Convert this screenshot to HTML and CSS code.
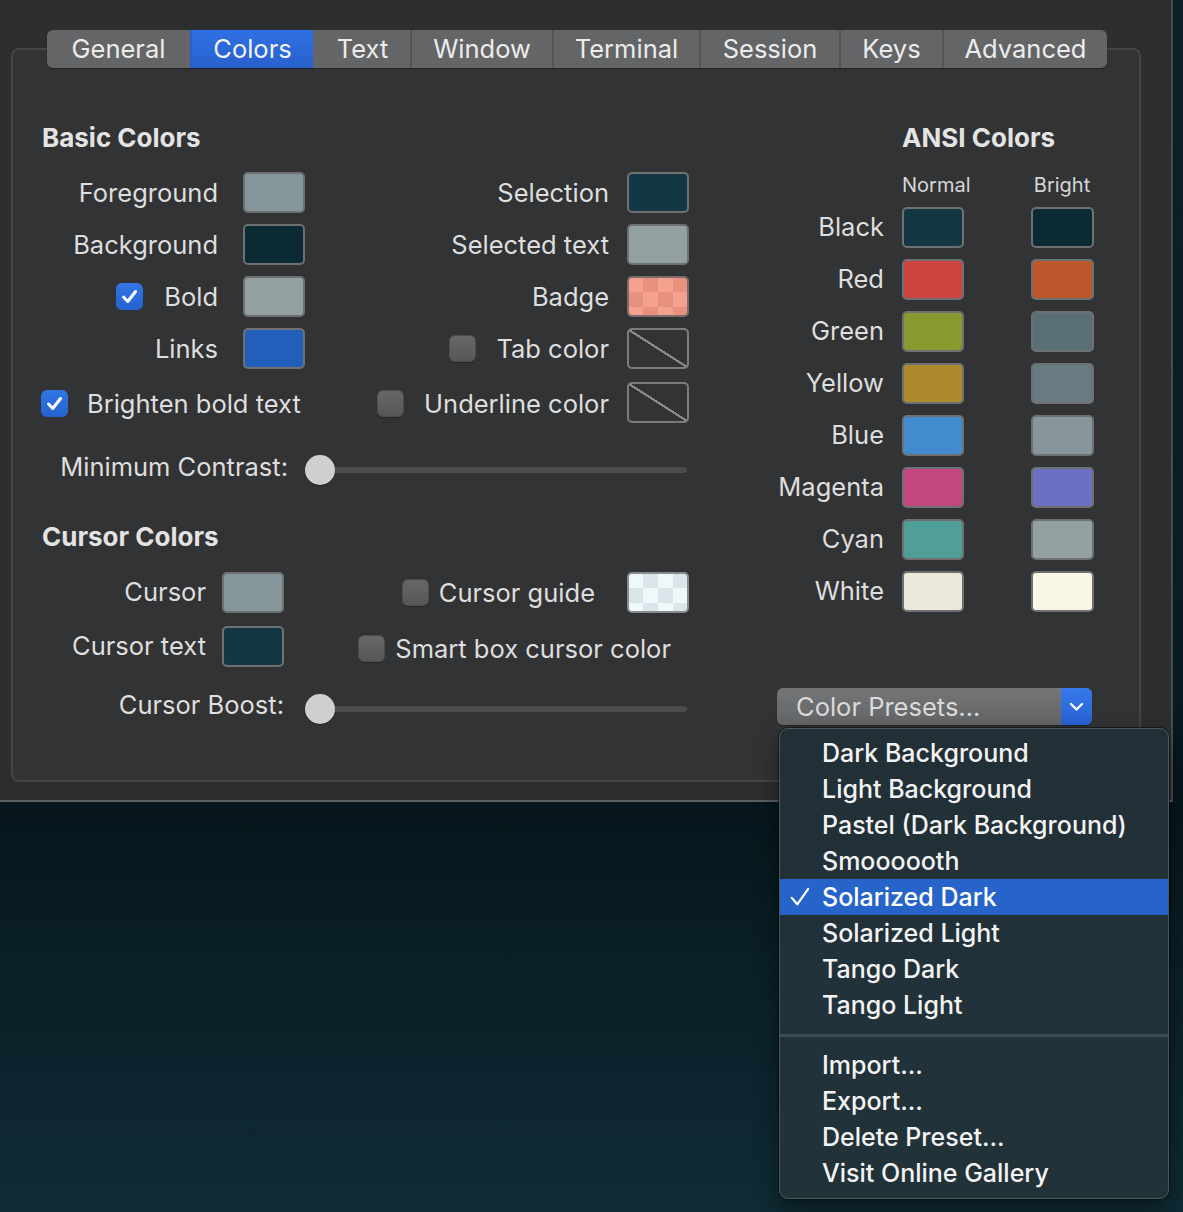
FILE: index.html
```html
<!DOCTYPE html>
<html>
<head>
<meta charset="utf-8">
<title>Profiles - Colors</title>
<link rel="stylesheet" href="styles.css">
</head>
<body>
<div class="window">
  <div class="tabs">
    <div class="tab t-general">General</div>
    <div class="tab t-colors active">Colors</div>
    <div class="tab t-text">Text</div>
    <div class="tab t-window">Window</div>
    <div class="tab t-terminal">Terminal</div>
    <div class="tab t-session">Session</div>
    <div class="tab t-keys">Keys</div>
    <div class="tab t-advanced">Advanced</div>
  </div>
  <div class="box">
    <div class="left">
      <h2 class="heading">Basic Colors</h2>
      <div class="basic-grid">
        <div class="lbl">Foreground</div><div class="sw c-fg"></div>
        <div class="lbl lbl-r">Selection</div><div class="sw c-sel"></div>

        <div class="lbl">Background</div><div class="sw c-bg"></div>
        <div class="lbl lbl-r">Selected text</div><div class="sw c-seltext"></div>

        <div class="lbl"><span class="cb on"><svg viewBox="0 0 27 27" width="27" height="27"><path d="M7.5 14 L11.8 18.5 L19.5 8.5" fill="none" stroke="#fff" stroke-width="3" stroke-linecap="round" stroke-linejoin="round"/></svg></span>Bold</div><div class="sw c-bold"></div>
        <div class="lbl lbl-r">Badge</div><div class="sw c-badge"></div>

        <div class="lbl">Links</div><div class="sw c-links"></div>
        <div class="lbl lbl-r"><span class="cb off"></span>Tab color</div><div class="sw c-none"></div>

        <div class="lbl lbl-wide"><span class="cb on"><svg viewBox="0 0 27 27" width="27" height="27"><path d="M7.5 14 L11.8 18.5 L19.5 8.5" fill="none" stroke="#fff" stroke-width="3" stroke-linecap="round" stroke-linejoin="round"/></svg></span>Brighten bold text</div>
        <div class="lbl lbl-r"><span class="cb off"></span>Underline color</div><div class="sw c-none"></div>
      </div>

      <div class="slider-row contrast">
        <div class="slider-label">Minimum Contrast:</div>
        <div class="slider"><span class="knob"></span><span class="track"></span></div>
      </div>

      <h2 class="heading cursor-head">Cursor Colors</h2>
      <div class="cursor-grid">
        <div class="clbl">Cursor</div><div class="sw c-cursor"></div>
        <div class="cright"><span class="cb off"></span><span>Cursor guide</span><div class="sw c-guide"></div></div>

        <div class="clbl">Cursor text</div><div class="sw c-cursortext"></div>
        <div class="cright smart"><span class="cb off"></span><span>Smart box cursor color</span></div>
      </div>

      <div class="slider-row boost">
        <div class="slider-label">Cursor Boost:</div>
        <div class="slider"><span class="knob"></span><span class="track"></span></div>
      </div>
    </div>

    <div class="right">
      <h2 class="heading ansi-title">ANSI Colors</h2>
      <div class="ansi-head">
        <span></span><span class="colh">Normal</span><span class="colh">Bright</span>
      </div>
      <div class="ansi-grid">
        <div class="albl">Black</div><div class="sw a-black"></div><div class="sw b-black"></div>
        <div class="albl">Red</div><div class="sw a-red"></div><div class="sw b-red"></div>
        <div class="albl">Green</div><div class="sw a-green"></div><div class="sw b-green"></div>
        <div class="albl">Yellow</div><div class="sw a-yellow"></div><div class="sw b-yellow"></div>
        <div class="albl">Blue</div><div class="sw a-blue"></div><div class="sw b-blue"></div>
        <div class="albl">Magenta</div><div class="sw a-magenta"></div><div class="sw b-magenta"></div>
        <div class="albl">Cyan</div><div class="sw a-cyan"></div><div class="sw b-cyan"></div>
        <div class="albl">White</div><div class="sw a-white"></div><div class="sw b-white"></div>
      </div>
      <div class="popup">
        <span class="popup-text">Color Presets...</span>
        <span class="popup-arrow"><svg viewBox="0 0 31 37" width="31" height="37"><path d="M10 16 L15.5 21.5 L21 16" fill="none" stroke="#fff" stroke-width="2.4" stroke-linecap="round" stroke-linejoin="round"/></svg></span>
      </div>
    </div>
  </div>
</div>

<div class="menu">
  <div class="item">Dark Background</div>
  <div class="item">Light Background</div>
  <div class="item">Pastel (Dark Background)</div>
  <div class="item">Smoooooth</div>
  <div class="item selected"><span class="check"><svg viewBox="0 0 22 22" width="22" height="22"><path d="M2 12 L8 19 L20 2" fill="none" stroke="#fff" stroke-width="2.4" stroke-linecap="round" stroke-linejoin="round"/></svg></span>Solarized Dark</div>
  <div class="item">Solarized Light</div>
  <div class="item">Tango Dark</div>
  <div class="item">Tango Light</div>
  <div class="sep"></div>
  <div class="item">Import...</div>
  <div class="item">Export...</div>
  <div class="item">Delete Preset...</div>
  <div class="item">Visit Online Gallery</div>
</div>
</body>
</html>
```

FILE: styles.css
```css
html, body {
  margin: 0;
  padding: 0;
}

body {
  width: 1183px;
  height: 1212px;
  overflow: hidden;
  position: relative;
  font-family: Inter, "Open Sans", "Liberation Sans", sans-serif;
  color: #dedede;
  background: linear-gradient(180deg, #0b2029 0px, #0a1c23 640px, #06161b 802px, #0b2029 980px, #0f2b34 1212px);
}

.window {
  width: 1173px;
  height: 802px;
  box-sizing: border-box;
  background: #2d2e30;
  border-bottom: 2px solid #5e5f61;
  border-right: 2px solid #4a4b4d;
  padding-top: 30px;
}

/* Tabs */
.tabs {
  display: flex;
  width: max-content;
  height: 38px;
  margin-left: 47px;
  border-radius: 6px;
  overflow: hidden;
  background: #646567;
  position: relative;
  z-index: 1;
  box-shadow: 0 1px 1px rgba(0, 0, 0, 0.35);
}

.tab {
  box-sizing: border-box;
  text-align: center;
  line-height: 38px;
  font-size: 25.5px;
  color: #ececec;
  border-left: 2px solid #545557;
}

.tab:first-child {
  border-left: 0;
}

.t-general { width: 143px; }
.t-colors { width: 123px; }
.t-text { width: 97px; }
.t-window { width: 142px; }
.t-terminal { width: 147px; }
.t-session { width: 140px; }
.t-keys { width: 103px; }
.t-advanced { width: 165px; }

.tab.active {
  background: linear-gradient(180deg, #2f70e2, #2861cd);
  color: #f2f2f2;
  border-left-color: #2861cd;
}

.tab.active + .tab {
  border-left-color: #646567;
}

/* Group box */
.box {
  margin: -20px 0 0 11px;
  width: 1130px;
  height: 734px;
  box-sizing: border-box;
  border: 2px solid #444547;
  border-radius: 8px;
  background: #323335;
  display: flex;
  padding: 72px 0 0 28px;
}

.heading {
  margin: 0;
  font-size: 26px;
  line-height: 32px;
  font-weight: 700;
  color: #e4e4e4;
  padding-left: 1px;
}

.left {
  width: 648px;
}

.right {
  width: 317px;
  margin-left: 88px;
}

/* swatches */
.sw {
  width: 62px;
  height: 41px;
  box-sizing: border-box;
  border: 2px solid #6f7072;
  border-radius: 5px;
}

.c-fg { background: #85979a; }
.c-bg { background: #0b2a33; }
.c-bold { background: #93a1a1; }
.c-links { background: #225fbb; }
.c-sel { background: #143843; }
.c-seltext { background: #93a1a1; }
.c-badge {
  background: repeating-conic-gradient(#e8917f 0 25%, #f5a190 0 50%) -1px -1px / 30px 30px;
  border-color: #7a6d6b;
}
.c-none {
  border-color: #7b7c7e;
  background: linear-gradient(to top right, transparent calc(50% - 1.2px), #8a8b8d calc(50% - 1px), #8a8b8d calc(50% + 1px), transparent calc(50% + 1.2px));
}
.c-cursor { background: #85979a; }
.c-cursortext { background: #143843; }
.c-guide {
  background: repeating-conic-gradient(#dce6ea 0 25%, #eff9fc 0 50%) -1px -1px / 30px 30px;
  border-color: #8a8b8d;
}

.a-black { background: #143843; }
.a-red { background: #cb4440; }
.a-green { background: #88992f; }
.a-yellow { background: #ad8a2b; }
.a-blue { background: #428bcf; }
.a-magenta { background: #c2467f; }
.a-cyan { background: #4f9f98; }
.a-white { background: #ebe8d9; }
.b-black { background: #0b2a33; }
.b-red { background: #bd562b; }
.b-green { background: #5a6e75; }
.b-yellow { background: #687b83; }
.b-blue { background: #86969a; }
.b-magenta { background: #6b70c2; }
.b-cyan { background: #93a1a1; }
.b-white { background: #f9f6e6; }

/* checkboxes */
.cb {
  display: inline-block;
  flex: none;
  width: 27px;
  height: 27px;
  box-sizing: border-box;
  border-radius: 6px;
}

.cb svg {
  display: block;
}

.cb.on {
  background: linear-gradient(180deg, #3275e6, #2462d0);
}

.cb.off {
  background: linear-gradient(180deg, #666769, #565759);
  border: 1px solid #4c4d4f;
  box-shadow: 0 1px 0 rgba(0, 0, 0, 0.25);
}

/* Basic colors grid */
.basic-grid {
  display: grid;
  grid-template-columns: 202px 62px 322px 62px;
  grid-template-rows: 41px 41px 41px 41px 43px;
  row-gap: 11px;
  margin-top: 18px;
  align-items: center;
}

.basic-grid > .sw:last-child {
  align-self: end;
}

.lbl {
  display: flex;
  justify-content: flex-end;
  align-items: center;
  gap: 21px;
  padding-right: 25px;
  font-size: 25.5px;
  line-height: 32px;
}

.lbl-r {
  padding-right: 18px;
  gap: 20px;
}

.lbl-wide {
  grid-column: 1 / 3;
  justify-content: flex-start;
  padding-right: 0;
  gap: 19px;
  padding-top: 4px;
}

.lbl-wide + .lbl-r {
  padding-top: 4px;
}

/* sliders */
.slider-row {
  display: flex;
  align-items: center;
  height: 32px;
  font-size: 25.5px;
}

.contrast {
  margin-top: 29px;
}

.boost {
  margin-top: 24px;
}

.slider-label {
  text-align: right;
  flex: none;
  padding-bottom: 3px;
}

.contrast .slider-label {
  width: 247px;
}

.boost .slider-label {
  width: 243px;
  padding-bottom: 5px;
}

.slider {
  flex: 1;
  display: flex;
  align-items: center;
  margin-right: 2px;
  padding-top: 4px;
}

.contrast .slider {
  margin-left: 17px;
}

.boost .slider {
  margin-left: 21px;
}

.knob {
  flex: none;
  width: 30px;
  height: 30px;
  border-radius: 50%;
  background: #cfcfd1;
  box-shadow: 0 1px 1px rgba(0, 0, 0, 0.3);
  position: relative;
  z-index: 1;
}

.track {
  flex: 1;
  height: 6px;
  border-radius: 3px;
  background: #4b4c4e;
  margin-left: -4px;
}

/* Cursor colors */
.cursor-head {
  margin-top: 37px;
}

.cursor-grid {
  display: grid;
  grid-template-columns: 181px 62px 1fr;
  grid-template-rows: 41px 41px;
  row-gap: 13px;
  margin-top: 19px;
  align-items: center;
  font-size: 25.5px;
}

.clbl {
  text-align: right;
  padding-right: 16px;
  padding-bottom: 3px;
}

.cright {
  display: flex;
  justify-content: flex-end;
  align-items: center;
  gap: 10px;
}

.cright .sw {
  margin-left: 22px;
}

.cright.smart {
  padding-right: 18px;
  padding-top: 4px;
}

/* ANSI */
.ansi-title {
  padding-left: 125px;
}

.ansi-head {
  display: grid;
  grid-template-columns: 125px 129px 63px;
  margin-top: 19px;
  font-size: 20px;
  line-height: 24px;
  color: #d6d6d6;
}

.colh {
  width: 62px;
  text-align: center;
}

.ansi-grid {
  display: grid;
  grid-template-columns: 125px 129px 63px;
  grid-auto-rows: 41px;
  row-gap: 11px;
  margin-top: 10px;
  align-items: center;
}

.albl {
  text-align: right;
  padding-right: 18px;
  font-size: 25.5px;
  padding-bottom: 2px;
}

.ansi-grid .sw:nth-child(3n) {
  width: 63px;
}

/* popup */
.popup {
  margin-top: 76px;
  width: 315px;
  height: 37px;
  display: flex;
  border-radius: 6px;
  overflow: hidden;
  background: linear-gradient(180deg, #747577, #646567);
  box-shadow: 0 1px 1px rgba(0, 0, 0, 0.35);
}

.popup-text {
  padding-left: 19px;
  font-size: 25.5px;
  line-height: 37px;
  color: #dadada;
}

.popup-arrow {
  margin-left: auto;
  width: 31px;
  height: 37px;
  background: linear-gradient(180deg, #3678ea, #2962d2);
}

.popup-arrow svg {
  display: block;
}

/* menu */
.menu {
  position: absolute;
  left: 779px;
  top: 728px;
  width: 390px;
  box-sizing: border-box;
  padding: 6px 0 7px;
  background: linear-gradient(180deg, #222f36, #21323a 60%, #223239);
  border: 1px solid #4c585d;
  border-radius: 9px;
  box-shadow: 0 0 0 1px rgba(0, 0, 0, 0.45), 0 10px 24px rgba(0, 0, 0, 0.45);
  z-index: 5;
}

.item {
  height: 36px;
  line-height: 36px;
  padding-left: 42px;
  font-size: 25px;
  font-weight: 500;
  color: #f3f3f3;
  display: flex;
  align-items: center;
}

.item.selected {
  background: #2764c9;
  padding-left: 10px;
  color: #ffffff;
}

.check {
  width: 32px;
  flex: none;
  display: flex;
  align-items: center;
}

.check svg {
  display: block;
  width: 20px;
  height: 20px;
}

.sep {
  height: 24px;
  background: linear-gradient(180deg, transparent 11px, #3b4d54 11px, #3b4d54 14px, transparent 14px);
}
```
